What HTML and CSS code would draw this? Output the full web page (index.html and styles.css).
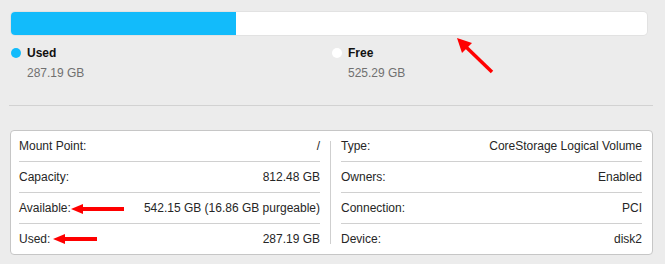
FILE: index.html
```html
<!DOCTYPE html>
<html lang="en">
  <head>
    <meta charset="UTF-8" />
    <link rel="stylesheet" href="styles.css">
    <title>Disk Info</title>
  </head>
  <body>
    <div class="page">
      <div class="usage-bar">
        <div class="usage-used" style="width: 35.4%"></div>
      </div>

      <div class="legend">
        <div class="legend-item">
          <div class="legend-head"><span class="dot dot-used"></span>Used</div>
          <div class="legend-value">287.19 GB</div>
        </div>
        <div class="legend-item">
          <div class="legend-head"><span class="dot dot-free"></span>Free</div>
          <div class="legend-value">525.29 GB</div>
        </div>
      </div>

      <div class="divider"></div>

      <div class="info-box">
        <div class="info-col">
          <div class="info-row"><span>Mount Point:</span><span>/</span></div>
          <div class="info-row"><span>Capacity:</span><span>812.48 GB</span></div>
          <div class="info-row"><span>Available:</span><span>542.15 GB (16.86 GB purgeable)</span></div>
          <div class="info-row"><span>Used:</span><span>287.19 GB</span></div>
        </div>
        <div class="col-sep"></div>
        <div class="info-col">
          <div class="info-row"><span>Type:</span><span>CoreStorage Logical Volume</span></div>
          <div class="info-row"><span>Owners:</span><span>Enabled</span></div>
          <div class="info-row"><span>Connection:</span><span>PCI</span></div>
          <div class="info-row"><span>Device:</span><span>disk2</span></div>
        </div>
      </div>
    </div>

    <!-- annotation arrows -->
    <svg class="arrows" width="665" height="264" viewBox="0 0 665 264">
      <line x1="492" y1="72" x2="464" y2="45" stroke="#f00" stroke-width="3.5" />
      <polygon points="457,38 472,43 462,53" fill="#f00" />
      <line x1="124" y1="209" x2="80" y2="209" stroke="#f00" stroke-width="4" />
      <polygon points="71,209 83,204 83,214" fill="#f00" />
      <line x1="97" y1="239" x2="62" y2="239" stroke="#f00" stroke-width="4" />
      <polygon points="53,239 65,234 65,244" fill="#f00" />
    </svg>
  </body>
</html>
```

FILE: styles.css
```css
body {
  margin: 0;
  padding: 0;
  width: 665px;
  height: 264px;
  background-color: #ececec;
  font-family: "Liberation Sans", Arial, sans-serif;
  font-size: 12px;
  color: #262626;
  overflow: hidden;
}

.page {
  padding: 12px 12px 0 10px;
}

.usage-bar {
  margin: 0 6px 0 1px;
  height: 23px;
  background-color: #fff;
  border-radius: 4px;
  box-shadow: 0 0 0 1px #e2e2e2;
  overflow: hidden;
  display: flex;
}

.usage-used {
  background-color: #12bbfb;
}

.legend {
  display: flex;
  margin-top: 11px;
  padding-left: 1px;
}

.legend-item {
  width: 325px;
}

.legend-head {
  display: flex;
  align-items: center;
  gap: 6px;
  font-weight: bold;
  color: #111;
  height: 14px;
}

.dot {
  width: 10px;
  height: 10px;
  border-radius: 50%;
}

.dot-used {
  background-color: #12bbfb;
}

.dot-free {
  background-color: #fff;
}

.legend-value {
  margin-top: 6px;
  padding-left: 16px;
  color: #707070;
}

.divider {
  margin-top: 25px;
  margin-left: -1px;
  height: 1px;
  background-color: #d2d2d2;
}

.info-box {
  margin-top: 24px;
  background-color: #fff;
  border: 1px solid #c6c6c6;
  border-radius: 4px;
  padding: 0 10px 0 8px;
  display: grid;
  grid-template-columns: 1fr 1px 1fr;
  column-gap: 10px;
}

.col-sep {
  margin: 10px 0;
  background-color: #cfcfcf;
}

.info-row {
  height: 30px;
  display: flex;
  justify-content: space-between;
  align-items: center;
  border-bottom: 1px solid #d0d0d0;
}

.info-row:last-child {
  border-bottom: none;
}

.arrows {
  position: absolute;
  left: 0;
  top: 0;
  pointer-events: none;
}
```
